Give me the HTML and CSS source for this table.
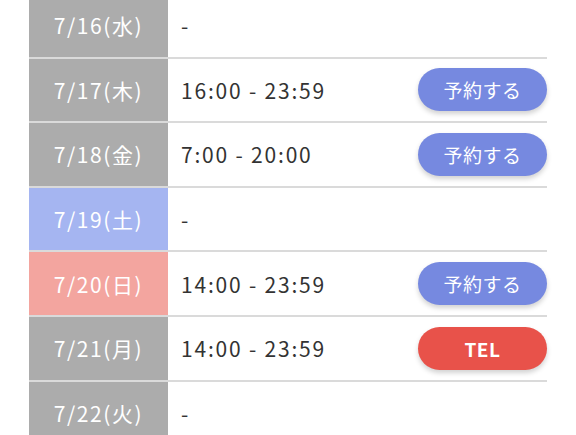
FILE: index.html
```html
<!DOCTYPE html>
<html lang="ja">
<head>
<meta charset="utf-8">
<link rel="stylesheet" href="styles.css">
</head>
<body>
<div class="schedule">
  <div class="row">
    <div class="date">7/16(水)</div>
    <div class="slot"><span class="time">-</span></div>
  </div>
  <div class="row">
    <div class="date">7/17(木)</div>
    <div class="slot"><span class="time">16:00 - 23:59</span><a class="btn btn-reserve">予約する</a></div>
  </div>
  <div class="row">
    <div class="date">7/18(金)</div>
    <div class="slot"><span class="time">7:00 - 20:00</span><a class="btn btn-reserve">予約する</a></div>
  </div>
  <div class="row">
    <div class="date date-sat">7/19(土)</div>
    <div class="slot"><span class="time">-</span></div>
  </div>
  <div class="row">
    <div class="date date-sun">7/20(日)</div>
    <div class="slot"><span class="time">14:00 - 23:59</span><a class="btn btn-reserve">予約する</a></div>
  </div>
  <div class="row">
    <div class="date">7/21(月)</div>
    <div class="slot"><span class="time">14:00 - 23:59</span><a class="btn btn-tel">TEL</a></div>
  </div>
  <div class="row">
    <div class="date">7/22(火)</div>
    <div class="slot"><span class="time">-</span></div>
  </div>
</div>
</body>
</html>
```
FILE: styles.css
```css
html, body {
  margin: 0;
  padding: 0;
  background: #ffffff;
  overflow: hidden;
}
body {
  font-family: "Noto Sans CJK JP", "Noto Sans", sans-serif;
  width: 576px;
  height: 435px;
}
.schedule {
  margin: -6px 29px 0 29px;
  width: 518px;
  display: flex;
  flex-direction: column;
}
.row {
  display: flex;
  height: 62.6px;
  border-bottom: 2px solid #dadada;
}
.date {
  width: 139px;
  flex: none;
  background: #acacac;
  color: #ffffff;
  font-size: 21px;
  letter-spacing: 1.6px;
  display: flex;
  align-items: center;
  justify-content: center;
  margin-right: 1px;
}
.date-sat {
  background: #a5b5f1;
}
.date-sun {
  background: #f3a59f;
}
.slot {
  flex: 1;
  display: flex;
  align-items: center;
  justify-content: space-between;
  padding-left: 12px;
}
.time {
  font-size: 21px;
  color: #333333;
  letter-spacing: 1.8px;
}
.btn {
  width: 129px;
  height: 43px;
  border-radius: 22px;
  color: #ffffff;
  display: flex;
  align-items: center;
  justify-content: center;
  font-size: 19px;
  letter-spacing: 0.5px;
  box-shadow: 0 3px 5px rgba(0, 0, 0, 0.18);
}
.btn-reserve {
  background: #7689e0;
}
.btn-tel {
  background: #e8524a;
  font-weight: bold;
}
```
